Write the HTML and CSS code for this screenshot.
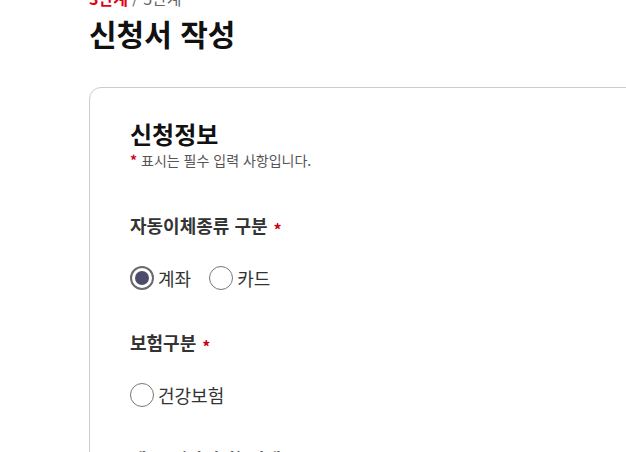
FILE: index.html
```html
<!DOCTYPE html>
<html lang="ko">
<head>
<meta charset="utf-8">
<link rel="stylesheet" href="styles.css">
</head>
<body>
<div class="page">
  <div class="step"><span class="step-cur">3단계</span> / 5단계</div>
  <h1 class="title">신청서 작성</h1>
  <section class="card">
    <h2 class="card-title">신청정보</h2>
    <p class="note"><span class="req">*</span> 표시는 필수 입력 사항입니다.</p>

    <div class="field first">
      <div class="label">자동이체종류 구분<span class="req-mark">*</span></div>
      <div class="radios">
        <label class="radio"><span class="dot checked"></span>계좌</label>
        <label class="radio"><span class="dot"></span>카드</label>
      </div>
    </div>

    <div class="field">
      <div class="label">보험구분<span class="req-mark">*</span></div>
      <div class="radios">
        <label class="radio"><span class="dot"></span>건강보험</label>
      </div>
    </div>

    <div class="field last">
      <div class="label">예금주(가입자) 선택</div>
    </div>
  </section>
</div>
</body>
</html>
```
FILE: styles.css
```css
html, body {
  margin: 0;
  padding: 0;
  background: #fff;
  overflow: hidden;
}
body {
  font-family: "Noto Sans CJK KR", "Noto Sans", sans-serif;
  color: #222;
}
.page {
  padding-left: 89px;
  margin-top: -13px;
}
.step {
  font-size: 16px;
  line-height: 22px;
  color: #666;
}
.step-cur {
  color: #e60012;
  font-weight: 700;
}
.title {
  margin: 4px 0 0;
  font-size: 30px;
  line-height: 40px;
  font-weight: 700;
  color: #111;
}
.card {
  margin-top: 34px;
  width: 640px;
  border: 1px solid #ccc;
  border-radius: 12px;
  padding: 31px 40px 40px;
  box-sizing: border-box;
}
.card-title {
  margin: 0;
  font-size: 24px;
  line-height: 30px;
  font-weight: 700;
  color: #111;
}
.note {
  margin: 1px 0 0;
  font-size: 14px;
  line-height: 20px;
  color: #555;
}
.req {
  color: #d0021b;
  font-weight: 700;
}
.field {
  margin-top: 38px;
}
.field.first {
  margin-top: 42px;
}
.field.last {
  margin-top: 38px;
}
.label {
  font-size: 18px;
  line-height: 26px;
  font-weight: 700;
  color: #333;
}
.req-mark {
  color: #d0021b;
  font-size: 16px;
  line-height: 0;
  margin-left: 6px;
  vertical-align: -3px;
}
.radios {
  display: flex;
  gap: 18px;
  margin-top: 27px;
}
.radio {
  display: flex;
  align-items: center;
  font-size: 18px;
  line-height: 26px;
  color: #333;
}
.dot {
  width: 24px;
  height: 24px;
  border: 1px solid #777;
  border-radius: 50%;
  margin-right: 4px;
  box-sizing: border-box;
  position: relative;
}
.dot.checked {
  border: 2px solid #6a6a6a;
}
.dot.checked::after {
  content: "";
  position: absolute;
  left: 3px;
  top: 3px;
  width: 14px;
  height: 14px;
  border-radius: 50%;
  background: #4b4d6b;
}
```
